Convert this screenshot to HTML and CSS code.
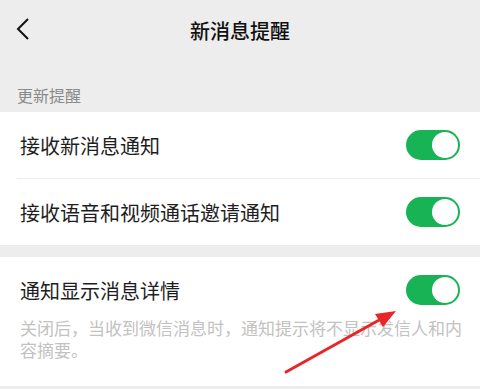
FILE: index.html
```html
<!doctype html>
<html lang="zh-CN">

<head>
  <meta charset="UTF-8" />
  <meta name="viewport" content="width=device-width, initial-scale=1.0">
  <title>新消息提醒</title>
  <link rel="stylesheet" href="styles.css">
</head>

<body>
  <div class="page">
    <div class="header">
      <svg class="back" width="14" height="24" viewBox="0 0 14 24">
        <path d="M12 2 L2 12 L12 22" fill="none" stroke="#111" stroke-width="2" />
      </svg>
      <h1>新消息提醒</h1>
    </div>

    <div class="section-label">更新提醒</div>

    <div class="group">
      <div class="row">
        <span>接收新消息通知</span>
        <div class="switch on"><div class="knob"></div></div>
      </div>
      <div class="divider"></div>
      <div class="row">
        <span>接收语音和视频通话邀请通知</span>
        <div class="switch on"><div class="knob"></div></div>
      </div>
    </div>

    <div class="group last">
      <div class="row">
        <span>通知显示消息详情</span>
        <div class="switch on"><div class="knob"></div></div>
      </div>
      <p class="desc">关闭后，当收到微信消息时，通知提示将不显示发信人和内容摘要。</p>
    </div>

    <!-- annotation arrow drawn over the screenshot -->
    <svg class="arrow" width="480" height="389" viewBox="0 0 480 389">
      <path d="M286 372 L381 319" stroke="#e8262a" stroke-width="3" stroke-linecap="round" fill="none" />
      <polygon points="396,311 375,314 383,327" fill="#e8262a" />
    </svg>
  </div>
</body>

</html>
```

FILE: styles.css
```css
body {
  margin: 0;
  padding: 0;
  background-color: #ededed;
  font-family: "Noto Sans CJK SC", "Noto Sans", sans-serif;
}

.page {
  position: relative;
  width: 480px;
  height: 389px;
  overflow: hidden;
}

.header {
  height: 60px;
  display: flex;
  align-items: center;
  justify-content: center;
  position: relative;
}

.header h1 {
  margin: 0;
  font-size: 20px;
  font-weight: 500;
  color: #111;
}

.back {
  position: absolute;
  left: 16px;
  top: 17px;
}

.section-label {
  height: 52px;
  box-sizing: border-box;
  padding: 24px 0 0 17px;
  font-size: 16px;
  line-height: 22px;
  color: #8a8a8a;
}

.group {
  background-color: #fff;
  margin-bottom: 12px;
}

.row {
  height: 66px;
  display: flex;
  align-items: center;
  justify-content: space-between;
  padding: 0 20px;
  font-size: 20px;
  color: #1e1e1e;
}

.divider {
  height: 1px;
  margin-left: 17px;
  background-color: #ececec;
}

.switch {
  width: 54px;
  height: 30px;
  border-radius: 15px;
  background-color: #e5e5e5;
  box-sizing: border-box;
  padding: 2px;
  display: flex;
}

.switch.on {
  background-color: #17b355;
  justify-content: flex-end;
}

.knob {
  width: 26px;
  height: 26px;
  border-radius: 50%;
  background-color: #fff;
}

.group.last {
  height: 129px;
}

.desc {
  margin: -6px 0 0;
  padding: 0 8px 0 20px;
  font-size: 17px;
  line-height: 22px;
  color: #c2c2c2;
}

.arrow {
  position: absolute;
  left: 0;
  top: 0;
}
```
